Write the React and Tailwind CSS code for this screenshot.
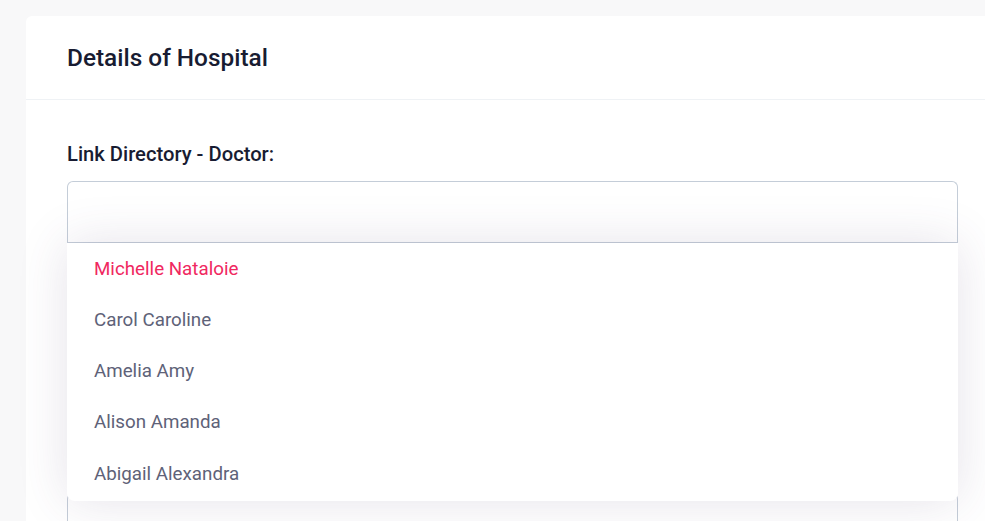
const DOCTORS = ['Michelle Nataloie', 'Carol Caroline', 'Amelia Amy', 'Alison Amanda', 'Abigail Alexandra']

export default function App() {
  return (
    <div className="h-[521px] w-[985px] overflow-hidden bg-[#f8f8f9] pt-4 pl-[26px]" style={{ fontFamily: 'Roboto, "Liberation Sans", sans-serif' }}>
      <div className="w-[973px] rounded-md bg-white">
        {/* Header */}
        <div className="flex h-[84px] items-center border-b border-[#eff2f5] px-[41px] pt-[2px]">
          <h2 className="text-[24.4px] font-medium text-[#181c32]">Details of Hospital</h2>
        </div>

        {/* Body */}
        <div className="px-[41px] pt-[42px] pb-10">
          <label className="mb-[15px] block text-[20.2px] font-medium leading-6 text-[#181c32]">Link Directory - Doctor:</label>

          <div className="relative">
            <div className="h-[61px] rounded-t-md border border-b-0 border-[#c4cdd8] bg-white" />
            <div className="h-px bg-[#c4cdd8]" />

            {/* Dropdown */}
            <ul className="relative z-10 rounded-b-lg bg-white pb-[2px] shadow-[0_0_50px_0_rgba(82,63,105,0.15)]">
              {DOCTORS.map((d, i) => (
                <li
                  key={d}
                  className={`flex h-[51.3px] items-center px-[27px] text-[18.75px] ${i === 0 ? 'text-[#f0285f]' : 'text-[#5e6278]'}`}
                >
                  {d}
                </li>
              ))}
            </ul>

            {/* Next field behind */}
            <div className="-mt-2 h-[62px] rounded-md border border-[#c4cdd8] bg-white" />
          </div>
        </div>
      </div>
    </div>
  )
}
